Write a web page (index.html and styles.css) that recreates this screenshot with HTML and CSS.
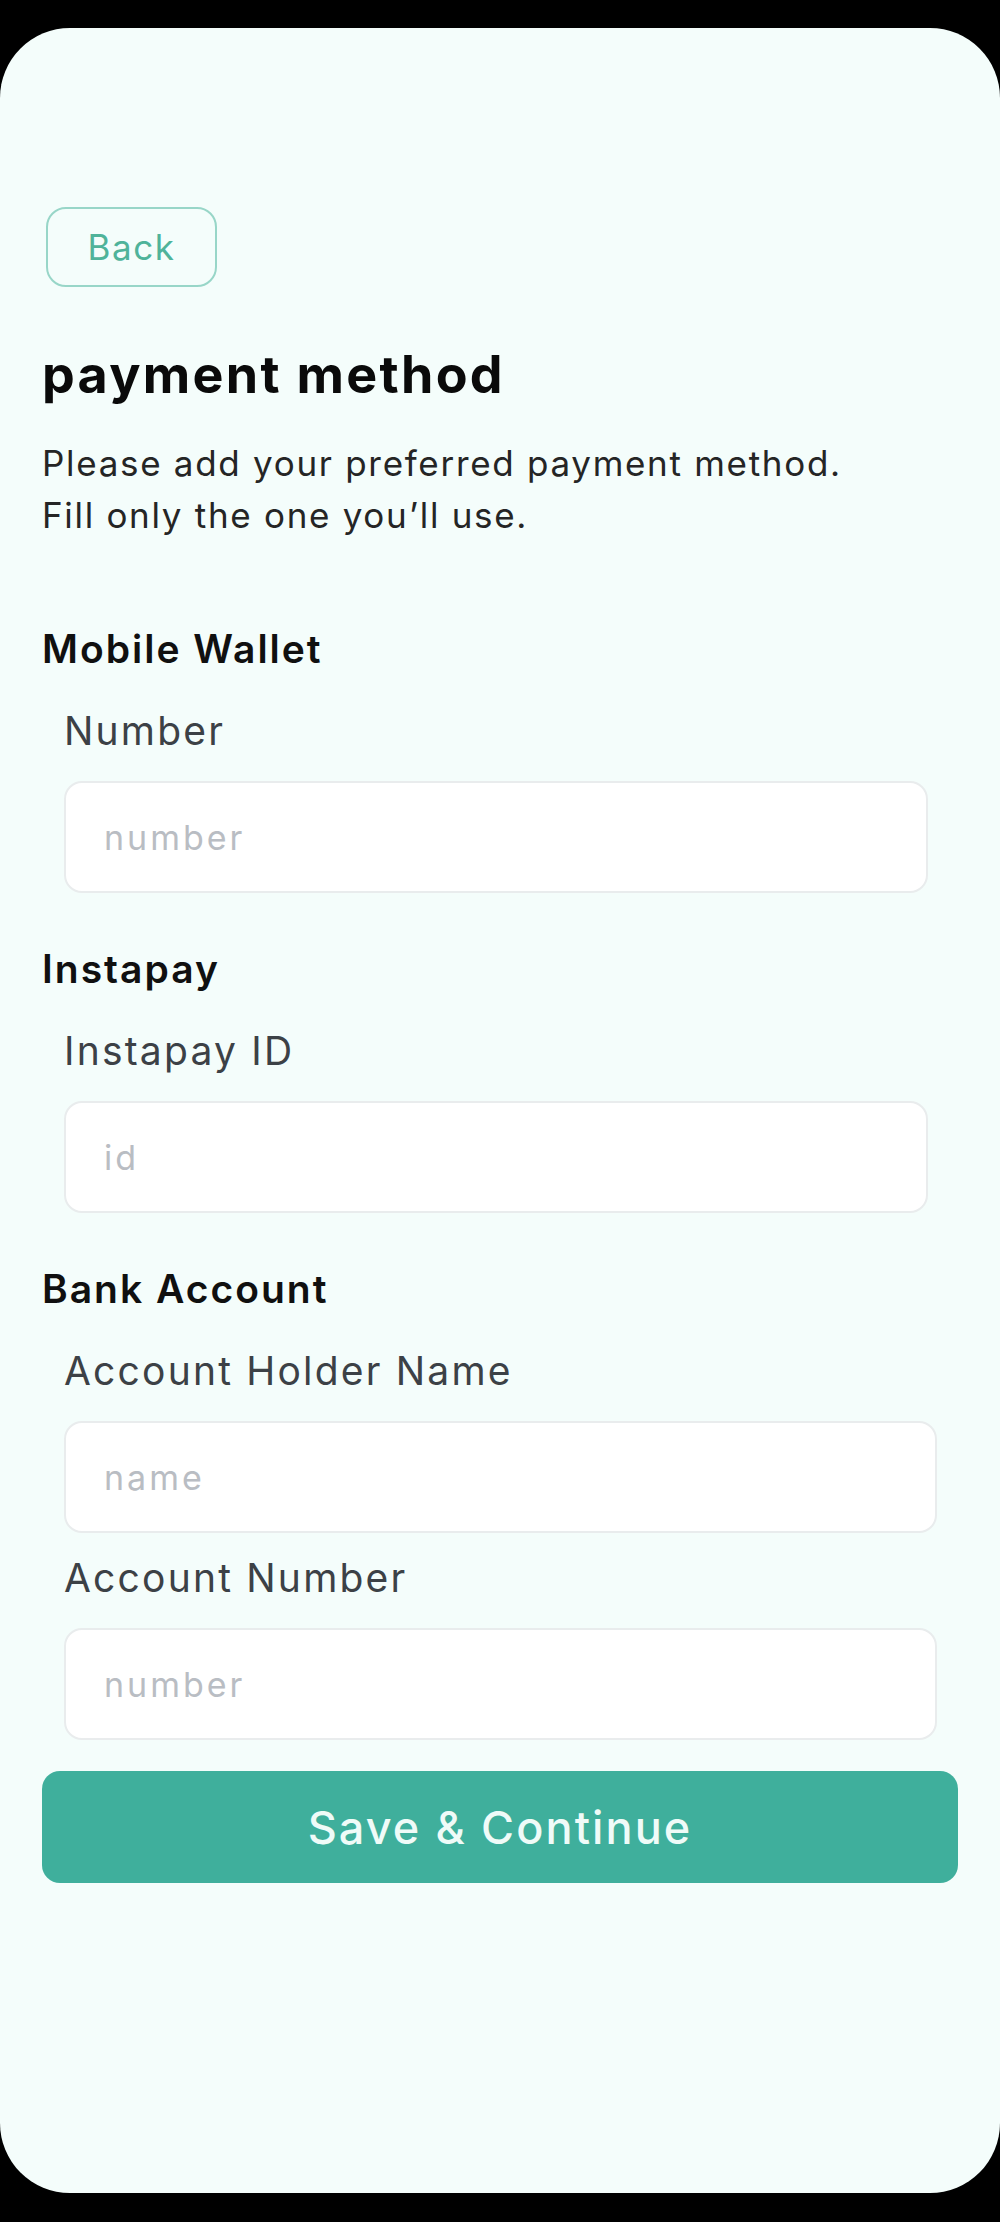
FILE: index.html
```html
<!DOCTYPE html>
<html lang="en">
<head>
<meta charset="utf-8">
<title>Payment method</title>
<link rel="stylesheet" href="styles.css">
</head>
<body>
<main class="screen">
  <button class="back-btn" type="button">Back</button>
  <h1 class="title">payment method</h1>
  <p class="intro">Please add your preferred payment method.<br>Fill only the one you’ll use.</p>

  <form class="methods">
    <section class="method">
      <h2 class="method__title">Mobile Wallet</h2>
      <label class="field">
        <span class="field__label">Number</span>
        <input class="field__input" type="text" placeholder="number">
      </label>
    </section>

    <section class="method">
      <h2 class="method__title">Instapay</h2>
      <label class="field">
        <span class="field__label">Instapay ID</span>
        <input class="field__input" type="text" placeholder="id">
      </label>
    </section>

    <section class="method method--bank">
      <h2 class="method__title">Bank Account</h2>
      <label class="field">
        <span class="field__label">Account Holder Name</span>
        <input class="field__input" type="text" placeholder="name">
      </label>
      <label class="field">
        <span class="field__label">Account Number</span>
        <input class="field__input" type="text" placeholder="number">
      </label>
    </section>

    <button class="save-btn" type="button">Save &amp; Continue</button>
  </form>
</main>
</body>
</html>
```

FILE: styles.css
```css
* {
  box-sizing: border-box;
}

html,
body {
  margin: 0;
  background: #000;
}

body {
  font-family: Inter, "Noto Sans", sans-serif;
}

/* phone screen card */
.screen {
  margin-top: 28px;
  min-height: 2165px;
  padding: 179px 42px 0;
  background: #f4fdfb;
  border-radius: 70px;
}

.back-btn {
  display: flex;
  align-items: center;
  justify-content: center;
  margin-left: 4px;
  width: 171px;
  height: 80px;
  padding: 0;
  background: transparent;
  border: 2px solid #98d6c8;
  border-radius: 20px;
  color: #4fb39a;
  font-family: inherit;
  font-size: 35px;
  line-height: 1;
  letter-spacing: 1.5px;
}

.title {
  margin: 58px 0 0;
  font-size: 52px;
  line-height: 60px;
  font-weight: 700;
  color: #0a0a0a;
  letter-spacing: 2.3px;
}

.intro {
  margin: 32px 0 0;
  font-size: 35px;
  line-height: 52px;
  color: #252525;
  letter-spacing: 1.7px;
}

.methods {
  margin-top: 83px;
}

.method + .method {
  margin-top: 51px;
}

.method__title {
  margin: 0 0 32px;
  font-size: 39px;
  line-height: 50px;
  font-weight: 600;
  color: #101010;
  letter-spacing: 2px;
}

.field {
  display: block;
  margin: 0 30px 0 22px;
}

.method--bank .field {
  margin-right: 21px;
}

.field + .field {
  margin-top: 20px;
}

.field__label {
  display: block;
  margin-bottom: 25px;
  font-size: 39px;
  line-height: 50px;
  color: #3c4146;
  letter-spacing: 2.2px;
}

.field__input {
  display: block;
  width: 100%;
  height: 112px;
  padding: 0 38px;
  background: #fff;
  border: 2px solid #e9eced;
  border-radius: 18px;
  font-family: inherit;
  font-size: 34px;
  color: #333;
  letter-spacing: 3px;
  outline: none;
}

.field__input::placeholder {
  color: #b9bdc3;
}

.save-btn {
  display: block;
  width: 100%;
  height: 112px;
  margin-top: 31px;
  background: #3faf9c;
  border: 0;
  border-radius: 18px;
  color: #effbf8;
  font-family: inherit;
  font-size: 45px;
  font-weight: 500;
  letter-spacing: 2.1px;
}
```
